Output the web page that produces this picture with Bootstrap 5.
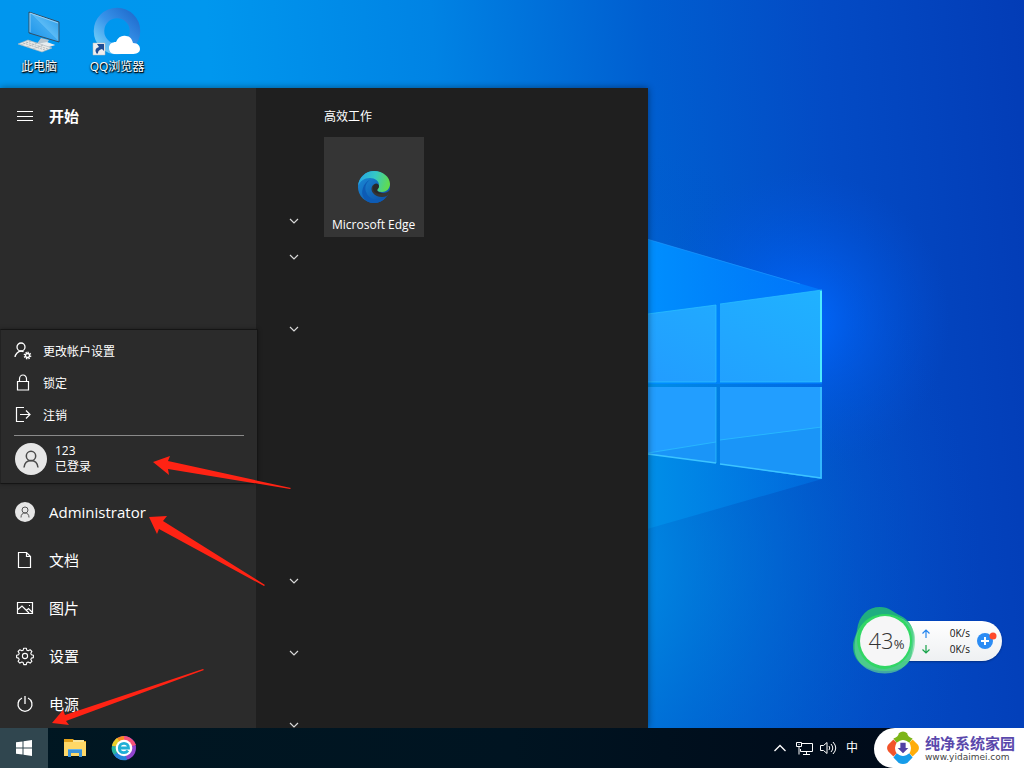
<!DOCTYPE html>
<html lang="zh-CN">
<head>
<meta charset="utf-8">
<meta name="viewport" content="width=device-width, initial-scale=1">
<title>开始</title>
<link href="https://cdn.jsdelivr.net/npm/bootstrap@5.3.0/dist/css/bootstrap.min.css" rel="stylesheet">
<style>
  body { font-family: "Open Sans", "Noto Sans CJK SC", sans-serif; font-size: 12px; line-height: 16px; }
  button { border: 0; background: none; color: inherit; padding: 0; text-align: left; }
  svg { display: block; flex: none; overflow: visible; }
  .line-art { fill: none; stroke: currentColor; }
  .wallpaper { inset: 0 0 40px; z-index: 0; overflow: hidden; background: #0050c8; }
  .shortcuts { height: 88px; z-index: 1; }
  .shortcut { width: 78px; height: 76px; color: #fff; text-decoration: none; text-shadow: 1px 1px 1px #000, 0 1px 2px #000; padding-top: 7px; }
  .start-menu { width: 648px; max-width: 100%; min-height: 0; z-index: 1; background: #1f1f1f; box-shadow: 0 0 7px rgba(0,0,0,.45); }
  .rail { width: 256px; flex: none; background: #2b2b2b; }
  .rail-item { height: 48px; padding-left: 16px; gap: 15px; font-size: 15px; line-height: 20px; }
  .rail-head { height: 56px; }
  .account-menu { width: 258px; margin-bottom: 4px; padding: 5px 13px 8px; background: #2b2b2b; border: 1px solid #151515; border-left-color: #222; box-shadow: 0 0 4px rgba(0,0,0,.35); z-index: 2; }
  .account-item { height: 32px; gap: 10px; }
  .account-item span { padding-top: 2px; }
  .account-user { gap: 9px; }
  .account-line { height: 1px; background: #8a8a8a; margin: 4px 0 7px; }
  .app-list { width: 68px; flex: none; padding-top: 115px; overflow: hidden; color: #d8d8d8; }
  .app-row { height: 36px; flex: none; padding-left: 33px; }
  .tiles { padding-top: 21px; }
  .tile { width: 100px; height: 100px; background: #353535; margin-top: 12px; padding: 33px 8px 4px; }
  .taskbar { height: 40px; background: linear-gradient(90deg, #001722, #001421 50%, #000c1b 80%, #000a18); z-index: 3; }
  .start-btn { width: 48px; background: #30464f; margin-right: 2px; }
  .task-btn { width: 49px; }
  .tray-btn { width: 24px; }
  .site-brand { width: 150px; margin-left: 10px; padding: 0 9px 0 13px; background: #fff; border-radius: 22px 0 0 20px; text-decoration: none; color: #5a48ac; }
  .brand-name { font-size: 15px; line-height: 18px; font-weight: 700; white-space: nowrap; }
  .brand-url { font-family: "DejaVu Sans", sans-serif; font-size: 9px; line-height: 10px; color: #444; white-space: nowrap; }
  .monitor { right: 22px; bottom: 93px; z-index: 2; }
  .gauge { width: 64px; height: 68px; }
  .gauge-value { inset: 0; color: #333; z-index: 1; font-weight: 300; font-size: 22px; line-height: 28px; padding: 19px 0 0 3px; }
  .gauge-value small { font-size: 13px; font-weight: 400; }
  .speeds { width: 116px; height: 40px; margin-left: -31px; padding: 0 7px 0 36px; border-radius: 0 20px 20px 0; background: linear-gradient(#fff, #eef0f2); color: #111; font-size: 10px; box-shadow: 0 1px 2px rgba(0,0,0,.3); }
  .speed-row { width: 48px; }
  .up-arrow { color: #2686ee; }
  .down-arrow { color: #16a34a; }
  .pointers { left: 0; bottom: 0; z-index: 4; pointer-events: none; }
</style>
</head>
<body>
<div class="vh-100 d-flex flex-column position-relative overflow-hidden">

  <div class="wallpaper position-absolute">
    <svg width="100%" height="100%" viewBox="0 0 1024 728" preserveAspectRatio="xMidYMid slice" aria-hidden="true">
      <defs>
        <linearGradient id="sky" gradientUnits="userSpaceOnUse" x1="0" y1="0" x2="1020" y2="-70"><stop offset="0" stop-color="#0096ee"/><stop offset=".2" stop-color="#0097ee"/><stop offset=".42" stop-color="#0083e4"/><stop offset=".63" stop-color="#005ed0"/><stop offset=".8" stop-color="#034bc5"/><stop offset="1" stop-color="#033cb6"/></linearGradient>
        <radialGradient id="low" gradientUnits="userSpaceOnUse" cx="560" cy="560" r="420"><stop offset="0" stop-color="#009cf0"/><stop offset=".3" stop-color="#0086e0" stop-opacity=".7"/><stop offset="1" stop-color="#0050c8" stop-opacity="0"/></radialGradient>
        <radialGradient id="glow" gradientUnits="userSpaceOnUse" cx="800" cy="320" r="150"><stop offset="0" stop-color="#006aff"/><stop offset=".35" stop-color="#0062f6" stop-opacity=".6"/><stop offset="1" stop-color="#0054dc" stop-opacity="0"/></radialGradient>
        <linearGradient id="beam"><stop offset="0" stop-color="#0090ff"/><stop offset="1" stop-color="#007cff" stop-opacity=".75"/></linearGradient>
        <linearGradient id="beam2"><stop offset="0" stop-color="#0090e8"/><stop offset="1" stop-color="#0070e4" stop-opacity=".6"/></linearGradient>
        <linearGradient id="pane" x1="0" y1="1" x2="1" y2="0"><stop offset="0" stop-color="#229cff"/><stop offset="1" stop-color="#20b2ff"/></linearGradient>
      </defs>
      <path fill="url(#sky)" d="M0 0h1024v728H0z"/>
      <path fill="url(#low)" d="M0 0h1024v728H0z"/>
      <path fill="url(#glow)" d="M600 100h424v450H600z"/>
      <path fill="url(#beam)" d="M640 237 822 290V384H640z"/>
      <path fill="url(#beam2)" d="M640 384H822V479L640 531z"/>
      <path d="M640 237 800 284" stroke="#279fff" stroke-opacity=".5"/>
      <path fill="url(#pane)" d="M640 315 716 305V382H640z M720 304 822 290V382H720z"/>
      <path fill="#229eff" d="M640 387H716V463L640 453z M720 387H822V479L720 464z"/>
      <path fill="#1690f4" fill-opacity=".6" d="M648 453 716 442V463z M720 440 822 427V479L720 464z"/>
      <path fill="none" stroke="#2bc0ff" stroke-opacity=".75" d="M640 315 716 305M720 304 822 290M648 453 716 442M720 440 822 427M640 382H716M720 382H822M716 305V382M716 387V463"/>
      <path fill="none" stroke="#3cc4ff" stroke-width="1.500" d="M640 453 716 463M720 464 821 478V387"/>
      <path fill="none" stroke="#4ceaff" stroke-width="2" d="M821 291V382"/>
    </svg>
  </div>

  <nav class="shortcuts d-flex flex-shrink-0 position-relative" aria-label="桌面">
    <a href="#" class="shortcut d-flex flex-column align-items-center gap-1">
      <svg width="44" height="48" viewBox="0 0 44 48" aria-hidden="true">
        <defs><linearGradient id="scr" x1="0" y1="1" x2="1" y2="0"><stop offset="0" stop-color="#1590e8"/><stop offset=".5" stop-color="#3da9f0"/><stop offset=".52" stop-color="#5abaf5"/><stop offset="1" stop-color="#2196e8"/></linearGradient></defs>
        <path fill="#b9c6cf" d="M24 31 32 33 30 36 38 38 30 41 19 38z"/>
        <path fill="#e8edf0" d="M20 37 30 35 38 38 30 40z"/>
        <path fill="url(#scr)" stroke="#334e65" d="M12 5 42 15V35L12 26z"/>
        <path fill="none" stroke="#b9dff8" stroke-width=".7" d="M13 25V6L41 16"/>
        <path fill="#e9e9e7" stroke="#a9b4bb" stroke-width=".6" d="M11 33 35 41 25 45 1 37z"/>
        <path stroke="#aab2b8" stroke-width=".8" stroke-dasharray="2 1" d="M9 35 31 42M6 36 28 43M14 34 4 38M20 36 10 40M26 38 16 42"/>
      </svg>
      <span>此电脑</span>
    </a>
    <a href="#" class="shortcut d-flex flex-column align-items-center gap-1">
      <svg width="52" height="48" viewBox="0 0 52 48" aria-hidden="true">
        <defs><linearGradient id="qq" x1="0" y1="1" x2="1" y2="0"><stop offset="0" stop-color="#75d2fa"/><stop offset=".5" stop-color="#3793ea"/><stop offset="1" stop-color="#206ccd"/></linearGradient></defs>
        <circle cx="26" cy="24" r="18" fill="none" stroke="url(#qq)" stroke-width="10.500"/>
        <path fill="#fff" d="M23 47a6 6 0 0 1-5-6c0-4 3-6 7-6 2-5 6-7 10-6 4 0 6 3 7 7 5 0 7 3 7 6 0 4-4 5-8 5z"/>
        <path fill="#eee" stroke="#bbb" stroke-width=".5" d="M2 36h12v12H2z"/>
        <path fill="#1f4d94" d="M6 37h7v7l-2-2c-3 1-4 2-4 4l-1 1c-3-4-1-6 2-7z"/>
      </svg>
      <span>QQ浏览器</span>
    </a>
  </nav>

  <main class="start-menu d-flex flex-grow-1 position-relative">
    <nav class="rail d-flex flex-column" aria-label="开始">
      <button class="rail-item rail-head d-flex align-items-center text-white fw-bold">
        <svg class="line-art" width="18" height="18" viewBox="0 0 18 18"><path d="M1 4.500h16M1 9.500h16M1 13.500h16"/></svg>
        开始
      </button>

      <div class="account-menu d-flex flex-column mt-auto position-relative text-white">
        <button class="account-item d-flex align-items-center">
          <svg class="line-art" width="19" height="18" viewBox="0 0 19 18" stroke-width="1.300"><circle cx="7" cy="5" r="4"/><path d="M1 15c.5-3 3-5.800 6-5.800 1 0 2 .2 2.500.7"/><circle cx="13.500" cy="13.500" r="2"/><path stroke-width="1.500" stroke-dasharray="1.300 1.174" d="M13.500 10.350a3.150 3.150 0 1 1 0 6.300 3.150 3.150 0 0 1 0-6.300"/></svg>
          <span>更改帐户设置</span>
        </button>
        <button class="account-item d-flex align-items-center">
          <svg class="line-art" width="19" height="18" viewBox="0 0 19 18" stroke-width="1.200"><path d="M3.500 7.500h11v8.500h-11zM5.500 7.500V5a3.500 4 0 0 1 7 0v2.500"/></svg>
          <span>锁定</span>
        </button>
        <button class="account-item d-flex align-items-center">
          <svg class="line-art" width="19" height="18" viewBox="0 0 19 18" stroke-width="1.200"><path d="M10 1.500H2.500v14H10M6 8.500h10M12 4.500l4 4-4 4"/></svg>
          <span>注销</span>
        </button>
        <div class="account-line"></div>
        <button class="account-user d-flex align-items-center">
          <svg width="32" height="32" viewBox="-1 0 32 32"><circle cx="16" cy="16" r="16" fill="#e6e6e6"/><g fill="none" stroke="#4a4a4a" stroke-width="1.500"><circle cx="16" cy="13" r="4.700"/><path d="M9 24.500c.5-4 3-7 7-7s6.500 3 7 7"/></g></svg>
          <span>123<br>已登录</span>
        </button>
      </div>

      <button class="rail-item d-flex align-items-center text-white">
        <svg width="18" height="20" viewBox="0 0 18 20"><circle cx="9" cy="10" r="10" fill="#e6e6e6"/><g fill="none" stroke="#555"><circle cx="9" cy="8" r="3"/><path d="M5 15.500c0-3 1.500-4.500 4-4.500s4 1.500 4 4.500"/></g></svg>
        Administrator
      </button>
      <button class="rail-item d-flex align-items-center text-white">
        <svg class="line-art" width="18" height="18" viewBox="0 0 18 18" stroke-width="1.200"><path d="M2.500 1.500h8l4 4v11h-12zM10.500 1.500v4h4"/></svg>
        文档
      </button>
      <button class="rail-item d-flex align-items-center text-white">
        <svg class="line-art" width="18" height="18" viewBox="0 0 18 18" stroke-width="1.200"><path d="M1.500 3.500h15v11h-15zM2 10.500l4-3.500 7 7M10.500 11.500l2-2 4 4"/><path d="M13 6.500h1"/></svg>
        图片
      </button>
      <button class="rail-item d-flex align-items-center text-white">
        <svg class="line-art" width="18" height="18" viewBox="-9 -9 18 18" stroke-width="1.100" stroke-linejoin="round"><path d="M-1.300-7.800h2.600l.5 2 1.400.6 1.900-1.100 1.800 1.800-1.100 1.800.6 1.400 2 .5v2.400l-2 .5-.6 1.400 1.100 1.800-1.800 1.800-1.900-1.100-1.400.6-.5 2h-2.600l-.5-2-1.400-.6-1.900 1.100-1.800-1.800 1.100-1.800-.6-1.400-2-.5v-2.400l2-.5.6-1.400-1.100-1.800 1.800-1.800 1.900 1.100 1.400-.6z"/><circle r="2.600"/></svg>
        设置
      </button>
      <button class="rail-item d-flex align-items-center text-white">
        <svg class="line-art" width="18" height="18" viewBox="0 0 18 18" stroke-width="1.300"><path d="M9 1v8M6 3a7 7 0 1 0 6 0"/></svg>
        电源
      </button>
    </nav>

    <div class="app-list d-flex flex-column" id="appList"></div>

    <section class="tiles text-white">
      <div>高效工作</div>
      <button class="tile d-flex flex-column justify-content-between">
        <svg class="ms-4" width="36" height="36" viewBox="0 0 36 36" aria-hidden="true">
          <defs>
            <linearGradient id="eg1" x1="0" y1=".3" x2="1" y2=".5"><stop offset="0" stop-color="#25a4e6"/><stop offset=".5" stop-color="#35c8c5"/><stop offset="1" stop-color="#62dc4b"/></linearGradient>
            <linearGradient id="eg2" x1="0" y1="0" x2="1" y2="1"><stop offset="0" stop-color="#1b8edb"/><stop offset="1" stop-color="#0c4ba0"/></linearGradient>
          </defs>
          <circle cx="18" cy="17" r="16" fill="url(#eg2)"/>
          <path fill="url(#eg1)" d="M2 16C3 7 10 1 18 1c9 0 16 6 16 13 0 5-4 8-8 8-3 0-5-1-5-2 0-1 2-2 2-5 0-4-4-7-9-7C8 8 4 11 2 16z"/>
          <path fill="#0d5bb5" d="M14 10c-5 3-6 9-3 14 4 7 13 7 19 3-3 4-7 6-12 6C9 33 4 25 7 18c1-4 4-7 7-8z"/>
          <path fill="#353535" d="M21 20c1 2 3 3 6 3 3 0 5-1 7-3v2l-3 4c-5 2-11 1-14-3-3-4-1-9 3-9 3 0 4 3 1 6z"/>
          <path fill="#292929" d="M23 16c0 2-2 3-2 4 0 2 3 3 6 3-6 2-10-1-10-5 0-5 5-6 6-2z"/>
        </svg>
        <span class="text-nowrap">Microsoft Edge</span>
      </button>
    </section>
  </main>

  <aside class="monitor position-absolute d-flex align-items-center">
    <div class="gauge position-relative">
      <svg width="64" height="68" viewBox="1 1 64 68" aria-hidden="true">
        <path fill="#23b878" fill-opacity=".9" d="M5 24C7 9 16 1 28 1c9 0 13 5 21 9 15 8 14 22 11 37-2 13-12 19-29 18C13 64 1 56 1 40c0-6 3-10 4-16z"/>
        <path fill="#62da92" fill-opacity=".65" d="M3 35C5 19 17 9 34 9c16 0 28 9 29 22 1 20-9 33-24 36-20 3-40-9-36-32z"/>
        <path fill="#2cd95e" fill-opacity=".85" d="M5 33C6 17 18 8 33 8s27 10 27 26-11 27-27 29C18 63 5 50 5 33z"/>
        <circle cx="33" cy="35" r="25" fill="#f6f6f7"/>
      </svg>
      <div class="gauge-value position-absolute d-flex align-items-baseline justify-content-center"><span>43</span><small>%</small></div>
    </div>
    <div class="speeds d-flex align-items-center justify-content-between">
      <div>
        <div class="speed-row d-flex align-items-center justify-content-between"><svg class="line-art up-arrow" width="8" height="9" viewBox="0 0 8 9" stroke-width="1.200"><path d="M4 9V1M.5 4.500 4 1l3.500 3.500"/></svg>0K/s</div>
        <div class="speed-row d-flex align-items-center justify-content-between"><svg class="line-art down-arrow" width="8" height="9" viewBox="0 0 8 9" stroke-width="1.200"><path d="M4 0v8M.5 4.500 4 8l3.500-3.500"/></svg>0K/s</div>
      </div>
      <button aria-label="加速"><svg width="20" height="20" viewBox="-1 0 20 20"><circle cx="9" cy="10" r="8" fill="#2c8cf4"/><path stroke="#fff" stroke-width="2" d="M9 6v8M5 10h8"/><circle cx="17" cy="5" r="3.500" fill="#ff4a2b"/></svg></button>
    </div>
  </aside>

  <footer class="taskbar d-flex flex-shrink-0 position-relative text-white">
    <button class="start-btn d-flex align-items-center justify-content-center" aria-label="开始">
      <svg width="16" height="16" viewBox="0 0 16 16" fill="#fff"><path d="M0 2.300 6.500 1.400V7.500H0zM7.500 1.200 16 0V7.500H7.500zM0 8.500h6.500v6.100L0 13.700zM7.500 8.500H16V16l-8.500-1.200z"/></svg>
    </button>
    <button class="task-btn d-flex align-items-center justify-content-center" aria-label="文件资源管理器">
      <svg width="22" height="20" viewBox="0 0 22 20"><path fill="#e3a21a" d="M0 1h9l2 2h11v6H0z"/><path fill="#ffd867" d="M0 4h22v14H0z"/><path fill="#f9e59a" d="M9 2h11v2H9z"/><path fill="#3b92d8" d="M4 11h14v8h-3v-4H7v4H4z"/><path fill="#66b4e9" d="M4 11h14v1H4z"/></svg>
    </button>
    <button class="task-btn d-flex align-items-center justify-content-center" aria-label="浏览器">
      <svg width="24" height="24" viewBox="0 0 24 24">
        <circle cx="12" cy="12" r="12" fill="#9044ce"/>
        <path fill="#f65178" d="M12 12V0c5 0 10 4 12 9z"/><path fill="#f68c20" d="M12 12 3 4c3-3 6-4 9-4z"/><path fill="#e9cf29" d="M12 12 0 10c0-3 2-5 5-8z"/><path fill="#24b6a0" d="M12 12 2 19c-2-3-3-6-2-9z"/><path fill="#2585d9" d="m12 12 3 12c-6 1-10-1-13-5z"/>
        <circle cx="12" cy="12" r="8.300" fill="#fff"/>
        <path fill="none" stroke="#20afd6" stroke-width="2.800" d="M8 12h8.500c0-3-2-4.700-4.500-4.700S7.300 9 7.300 12s2 4.700 4.700 4.700c1.800 0 3-.7 4-2"/>
      </svg>
    </button>

    <div class="d-flex ms-auto">
      <button class="tray-btn d-flex align-items-center justify-content-center" aria-label="显示隐藏的图标"><svg class="line-art" width="12" height="8" viewBox="0 0 12 8" stroke-width="1.300"><path d="m.5 7 5.500-5.500L11.500 7"/></svg></button>
      <button class="tray-btn d-flex align-items-center justify-content-center" aria-label="网络"><svg class="line-art" width="17" height="14" viewBox="0 0 17 14"><path d="M6 2.500h10.500v8H4.500V8M.5 1.500h5v4h-5zM3 5.500v8M10.500 10.500v3M7 13.500h7M2.500 3.500h1"/></svg></button>
      <button class="tray-btn d-flex align-items-center justify-content-center" aria-label="音量"><svg class="line-art" width="17" height="14" viewBox="0 0 17 14"><path d="M.5 4.500h3L7 1.500v11l-3.500-3h-3zM9 5q1.500 2 0 4M11 3q3.500 4 0 8M13 1q5.500 6 0 12"/></svg></button>
      <button class="tray-btn text-center" aria-label="输入法">中</button>
    </div>
    <a href="#" class="site-brand d-flex align-items-center justify-content-between">
      <svg width="32" height="34" viewBox="0 0 30 32" aria-hidden="true">
        <path fill="#7cb518" d="M6 7q5-2 5-5 4-3 8 0 0 3 5 5l-3 4q-6-5-12 0z"/>
        <path fill="#ffad0a" d="m24 8 5 5q2 3 0 6l-5 5-3-3q3-5 0-10z"/>
        <path fill="#169ce9" d="m9 21q6 5 12 0l3 4-5 5q-4 2-8 0l-5-5z"/>
        <path fill="#f2542b" d="m6 8 3 3q-3 5 0 10l-3 3-5-5q-2-3 0-6z"/>
        <circle cx="15" cy="16" r="7" fill="#fff"/>
        <path fill="#5140a3" d="M12.500 11h5v5H20l-5 5-5-5h2.500z"/>
      </svg>
      <span><span class="brand-name d-block">纯净系统家园</span><span class="brand-url d-block">www.yidaimei.com</span></span>
    </a>
  </footer>

  <svg class="pointers position-absolute" width="300" height="320" viewBox="0 448 300 320" fill="#ff2314" aria-hidden="true">
    <path d="m153 462 17-6-2 5 123 27-1 1-122-20 1 6z"/>
    <path d="m149 517 18-1-4 5 102 64-1 1-105-57-2 5z"/>
    <path d="m52 723 11-13 2 5 138-46 1 1-138 51 3 4z"/>
  </svg>
</div>

<script src="https://cdn.jsdelivr.net/npm/bootstrap@5.3.0/dist/js/bootstrap.bundle.min.js"></script>
<script>
  // Rows of the app list; 1 marks a folder that can be expanded.
  const rows = [1, 1, 0, 1, 0, 0, 0, 0, 0, 0, 1, 0, 1, 0, 1];
  document.getElementById('appList').innerHTML = rows.map(open =>
    '<div class="app-row d-flex align-items-center">' +
    (open ? '<button aria-label="展开"><svg class="line-art" width="10" height="6" viewBox="0 0 10 6" stroke-width="1.200"><path d="m1 1 4 4 4-4"/></svg></button>' : '') +
    '</div>').join('');
</script>
</body>
</html>
